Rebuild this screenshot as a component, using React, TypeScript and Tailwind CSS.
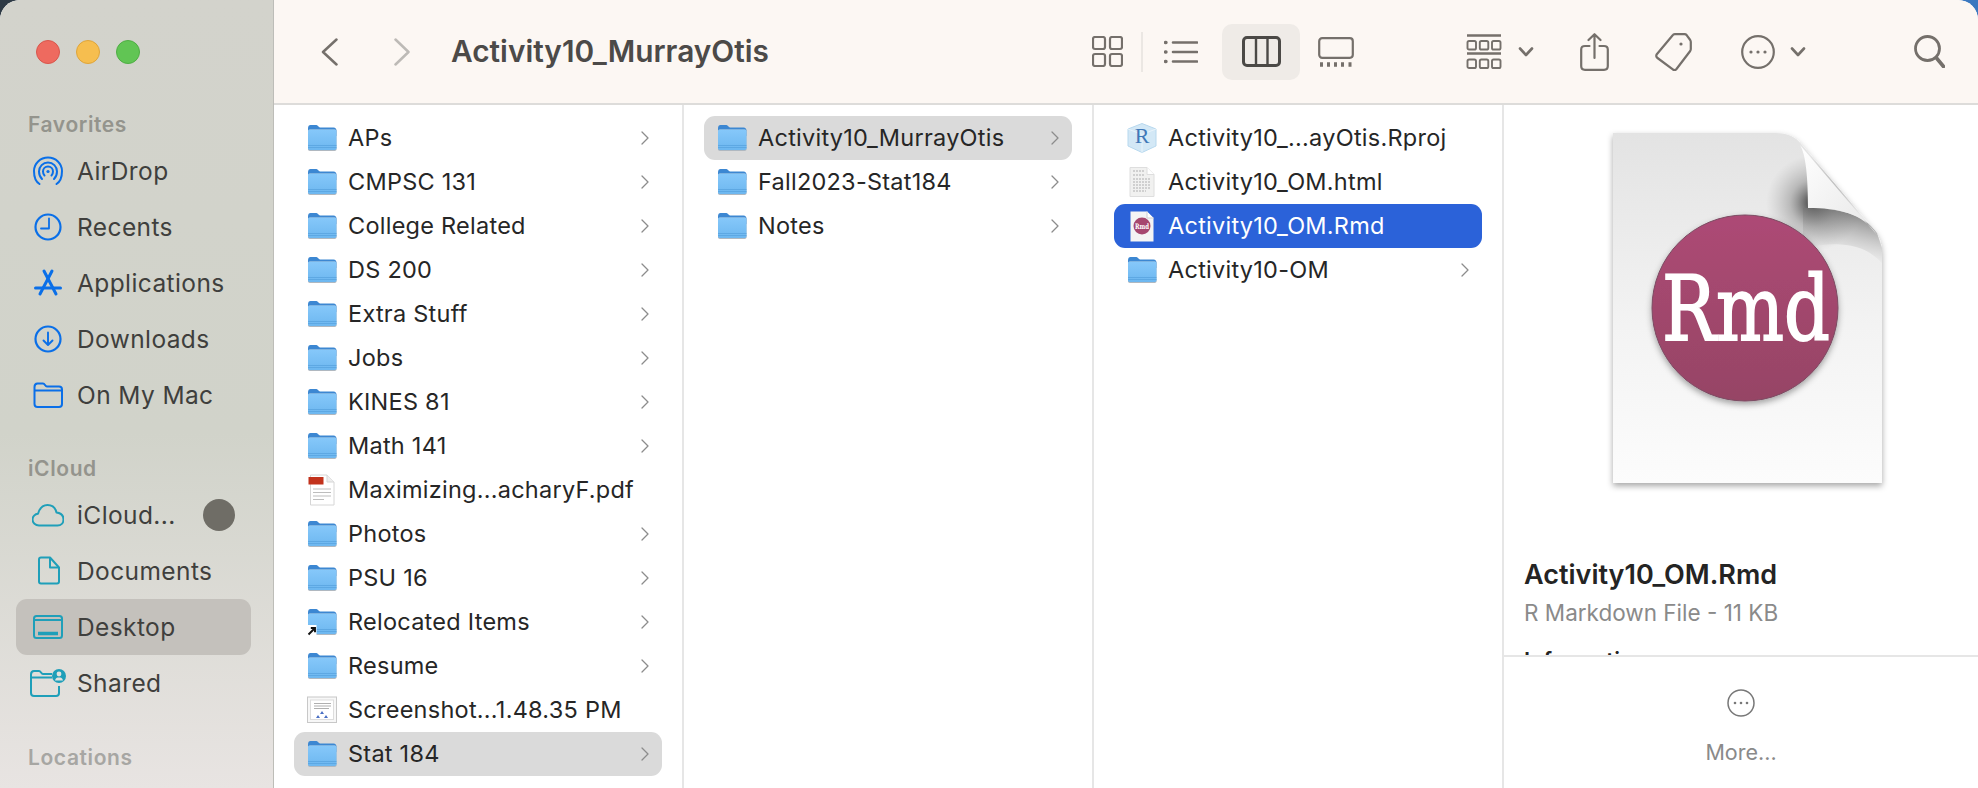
const Folder = ({ alias }: { alias?: boolean }) => (
  <svg viewBox="0 0 30 28" className="w-[30px] h-[28px] shrink-0">
    <defs>
      <linearGradient id="folderBody" x1="0" y1="0" x2="0" y2="1">
        <stop offset="0" stopColor="#86c8fa" />
        <stop offset="1" stopColor="#6db7f0" />
      </linearGradient>
    </defs>
    <path d="M1 4.5C1 2 2 1 3.5 1H9.5C11 1 11.5 3.5 13 3.5H26.5C28.5 3.5 29.5 5 29.5 6.5V12H1Z" fill="#3c87d2" />
    <rect x="1" y="5.5" width="28.5" height="21.5" rx="1.8" fill="#b0b8c0" />
    <rect x="1" y="5.5" width="28.5" height="20.5" rx="1.8" fill="url(#folderBody)" />
    <path d="M1 21.5H29.5M1 23.5H29.5" stroke="#55a0dc" strokeWidth="0.7" />
    {alias && (
      <g>
        <rect x="0" y="17" width="9.5" height="11" fill="#ffffff" />
        <path d="M1.5 26.5L7.5 20.5M3.8 20H8V24.2" stroke="#111111" strokeWidth="1.9" fill="none" />
      </g>
    )}
  </svg>
);

const Chevron = () => (
  <svg viewBox="0 0 8 14" className="w-2 h-[14px] shrink-0 ml-auto">
    <path d="M1 1L7 7L1 13" fill="none" stroke="#8c8c8c" strokeWidth="1.3" strokeLinecap="round" strokeLinejoin="round" />
  </svg>
);

const PdfIcon = () => (
  <svg viewBox="0 0 30 32" className="w-[30px] h-8 shrink-0">
    <path d="M3.5 1H20L27 8V31H3.5Z" fill="#ffffff" stroke="#d6d6d6" />
    <path d="M20 1V8H27" fill="#eeeeee" stroke="#d6d6d6" />
    <rect x="1.5" y="3" width="15" height="7.5" fill="#c2321c" />
    <path d="M6 15H24M6 18.5H24M6 22H24M6 25.5H17" stroke="#bdbdbd" />
  </svg>
);

const ImageIcon = () => (
  <svg viewBox="0 0 30 28" className="w-[30px] h-7 shrink-0">
    <rect x="0.5" y="1" width="29" height="25.5" fill="#f7f7f7" stroke="#c8c8c8" />
    <rect x="3.5" y="4" width="23" height="19.5" fill="#ffffff" stroke="#dddddd" />
    <path d="M7 7.5H24M7 10H24M7 12.5H22" stroke="#9a9a9a" strokeWidth="0.8" />
    <path d="M15 15L17 18H13ZM11 19L13 22H9ZM19 19L21 22H17Z" fill="#4a6fc4" />
  </svg>
);

const RprojIcon = () => (
  <svg viewBox="0 0 30 30" className="w-[30px] h-[30px] shrink-0">
    <path d="M15 0.5L29 6V23L15 29.5L1 23V6Z" fill="#d3e8f6" stroke="#b7d8ee" />
    <path d="M1 6L15 11.5L29 6M15 11.5V29.5" fill="none" stroke="#e9f4fb" />
    <text x="15" y="20" textAnchor="middle" fontFamily="Liberation Serif, serif" fontSize="22" fill="#3f78b8">R</text>
  </svg>
);

const HtmlIcon = () => (
  <svg viewBox="0 0 26 30" className="w-[26px] h-[30px] shrink-0">
    <path d="M1 0.5H18L25 7.5V29.5H1Z" fill="#f1f1f0" stroke="#dedede" />
    <path d="M18 0.5V7.5H25" fill="#ffffff" stroke="#dedede" />
    <path d="M4 4H15M4 8H15M4 12H21M4 15H21M4 18H21M4 21H21M4 24H17" stroke="#b0b0b0" strokeWidth="1.2" strokeDasharray="2 1" />
  </svg>
);

const RmdSmall = () => (
  <svg viewBox="0 0 24 31" className="w-6 h-[31px] shrink-0">
    <path d="M0.5 0.5H17L23.5 7V30.5H0.5Z" fill="#f4f4f4" />
    <path d="M17 0.5V7H23.5" fill="#ffffff" stroke="#d0d0d0" />
    <circle cx="12" cy="15" r="8.5" fill="#a6476f" />
    <text x="12" y="18" textAnchor="middle" fontFamily="DejaVu Serif, serif" fontWeight="bold" fontSize="7.5" textLength="14" lengthAdjust="spacingAndGlyphs" fill="#ffffff">Rmd</text>
  </svg>
);

const iconCls = "w-8 h-8 shrink-0";

const AirDropIcon = () => (
  <svg viewBox="0 0 32 32" className={iconCls} fill="none" stroke="#0a6fe8" strokeWidth="2" strokeLinecap="round">
    <path d="M7.5 29C3.5 26.5 2 22 2 16C2 8.5 8.3 2.5 16 2.5S30 8.5 30 16C30 22 28.5 26.5 24.5 29" />
    <path d="M10 24C8 22 7 19.5 7 16.5C7 11.5 11 7.5 16 7.5S25 11.5 25 16.5C25 19.5 24 22 22 24" />
    <path d="M12.5 20.5C11.5 19.5 11 18 11 16.5C11 13.7 13.2 11.5 16 11.5S21 13.7 21 16.5C21 18 20.5 19.5 19.5 20.5" />
    <circle cx="16" cy="16.5" r="1.6" fill="#0a6fe8" stroke="none" />
  </svg>
);

const RecentsIcon = () => (
  <svg viewBox="0 0 32 32" className={iconCls} fill="none" stroke="#0a6fe8" strokeWidth="2.2" strokeLinecap="round" strokeLinejoin="round">
    <circle cx="16" cy="16" r="12.5" />
    <path d="M17 7.5V17.5H9" strokeWidth="1.8" />
  </svg>
);

const AppsIcon = () => (
  <svg viewBox="0 0 32 32" className={iconCls} fill="none" stroke="#0a6fe8" strokeWidth="3" strokeLinecap="round">
    <path d="M12 4L24 27" />
    <path d="M20 4L8 27" />
    <path d="M3.5 21H28.5" />
  </svg>
);

const DownloadsIcon = () => (
  <svg viewBox="0 0 32 32" className={iconCls} fill="none" stroke="#0a6fe8" strokeWidth="2.2" strokeLinecap="round" strokeLinejoin="round">
    <circle cx="16" cy="16" r="12.5" />
    <path d="M16 9.5V21.5M11.5 17.5L16 22L20.5 17.5" strokeWidth="1.9" />
  </svg>
);

const MacIcon = () => (
  <svg viewBox="0 0 32 32" className={iconCls} fill="none" stroke="#0a6fe8" strokeWidth="2" strokeLinejoin="round">
    <path d="M2.5 8C2.5 5.5 3.5 4.5 5.5 4.5H11C13 4.5 13 7.5 15 7.5H27C29 7.5 30 8.5 30 10.5V25C30 27 29 28 27 28H5.5C3.5 28 2.5 27 2.5 25Z" />
    <path d="M2.5 11.5H30" />
  </svg>
);

const CloudIcon = () => (
  <svg viewBox="0 0 32 32" className={iconCls} fill="none" stroke="#1f9fb9" strokeWidth="2" strokeLinejoin="round">
    <path d="M7 26.5C3.5 26.5 0.5 24 0.5 20.5C0.5 17.5 3 15 6 14.8C7.5 9.5 11 6 15.5 6C20 6 23.5 9 24.5 13.5C28.5 14 31.5 16.5 31.5 20.5C31.5 24 29 26.5 25.5 26.5Z" />
  </svg>
);

const DocIcon = () => (
  <svg viewBox="0 0 32 32" className={iconCls} fill="none" stroke="#1f9fb9" strokeWidth="2" strokeLinejoin="round">
    <path d="M7 4.5C7 3.3 7.8 2.5 9 2.5H18L27 12.5V26.5C27 27.8 26.2 28.5 25 28.5H9C7.8 28.5 7 27.8 7 26.5Z" />
    <path d="M18 2.5V12.5H27" />
  </svg>
);

const DesktopIcon = () => (
  <svg viewBox="0 0 32 32" className={iconCls} fill="none" stroke="#1f9fb9" strokeWidth="2">
    <rect x="2" y="5" width="28" height="22" rx="2.5" />
    <path d="M2 9H30" />
    <path d="M6 22.5H26" strokeWidth="3.5" />
  </svg>
);

const SharedIcon = () => (
  <svg viewBox="0 0 36 32" className="w-9 h-8 shrink-0" fill="none" stroke="#1f9fb9" strokeWidth="2" strokeLinejoin="round">
    <path d="M22 7H13C11 7 11 4 9 4H4C2 4 1 5 1 7.5V26C1 28 2 29 4 29H26C28 29 29 28 29 26V19" />
    <path d="M1 10.5H22" />
    <circle cx="29" cy="9" r="7" fill="#1f9fb9" stroke="none" />
    <circle cx="29" cy="7" r="2.4" fill="#e3e2dd" stroke="none" />
    <path d="M25 13.5C25.5 11 27 10.5 29 10.5S32.5 11 33 13.5Z" fill="#e3e2dd" stroke="none" />
  </svg>
);

const SideRow = ({ icon, label, active, badge }: { icon: React.ReactNode; label: string; active?: boolean; badge?: boolean }) => (
  <div className={`flex items-center h-14 rounded-[11px] pl-4 ${active ? "bg-[#c4c1bc]" : ""}`}>
    <div className="w-8 flex justify-center shrink-0">{icon}</div>
    <span className="ml-[13px] text-[24.5px] tracking-[0.4px] text-[#3f3f3d]">{label}</span>
    {badge && <span className="ml-auto mr-4 w-8 h-8 rounded-full bg-[#6f6d66]" />}
  </div>
);

const SideLabel = ({ text, className }: { text: string; className?: string }) => (
  <div className={`h-9 flex items-center pl-3 text-[21px] tracking-[0.6px] font-semibold text-[#94948d] ${className ?? ""}`}>{text}</div>
);

const TrafficLights = () => (
  <div className="flex gap-4 ml-5 mb-[43px]">
    <span className="w-6 h-6 rounded-full bg-[#ee6a5f] border border-[#d9564c]" />
    <span className="w-6 h-6 rounded-full bg-[#f6be4f] border border-[#dfa53a]" />
    <span className="w-6 h-6 rounded-full bg-[#61c554] border border-[#4fae44]" />
  </div>
);

const Sidebar = () => (
  <aside className="w-[274px] shrink-0 h-full pt-10 pl-4 pr-[22px] border-r border-[#bdbdb8] overflow-hidden bg-linear-to-b from-[#d3d3cc] via-[#d1d3ca] via-55% to-[#e8e4e2]">
    <TrafficLights />
    <SideLabel text="Favorites" />
    <SideRow icon={<AirDropIcon />} label="AirDrop" />
    <SideRow icon={<RecentsIcon />} label="Recents" />
    <SideRow icon={<AppsIcon />} label="Applications" />
    <SideRow icon={<DownloadsIcon />} label="Downloads" />
    <SideRow icon={<MacIcon />} label="On My Mac" />
    <SideLabel text="iCloud" className="mt-7" />
    <SideRow icon={<CloudIcon />} label="iCloud..." badge />
    <SideRow icon={<DocIcon />} label="Documents" />
    <SideRow icon={<DesktopIcon />} label="Desktop" active />
    <SideRow icon={<SharedIcon />} label="Shared" />
    <SideLabel text="Locations" className="mt-[29px] text-[#a7a6a3]" />
  </aside>
);

const Row = ({ icon, label, arrow, state }: { icon: React.ReactNode; label: string; arrow?: boolean; state?: "path" | "selected" }) => (
  <div
    className={`flex items-center h-11 rounded-[11px] pl-[13px] pr-[13px] ${
      state === "path" ? "bg-[#dadada]" : state === "selected" ? "bg-[#2b62d9]" : ""
    }`}
  >
    <div className="w-[30px] flex justify-center shrink-0">{icon}</div>
    <span className={`ml-[11px] text-[23.5px] tracking-[0.25px] whitespace-nowrap ${state === "selected" ? "text-white" : "text-[#262626]"}`}>{label}</span>
    {arrow && <Chevron />}
  </div>
);

const firstColumn = [
  "APs",
  "CMPSC 131",
  "College Related",
  "DS 200",
  "Extra Stuff",
  "Jobs",
  "KINES 81",
  "Math 141",
];

const secondPart = ["Photos", "PSU 16"];

const Column = ({ children }: { children: React.ReactNode }) => (
  <div className="w-[410px] shrink-0 h-full pt-[11px] pl-5 pr-5 border-r-2 border-[#e6e6e6]">{children}</div>
);

const ToolIcon = ({ className, viewBox, children, stroke = "#75706b" }: { className: string; viewBox: string; children: React.ReactNode; stroke?: string }) => (
  <svg viewBox={viewBox} className={`shrink-0 ${className}`} fill="none" stroke={stroke} strokeWidth="2.2" strokeLinecap="round" strokeLinejoin="round">
    {children}
  </svg>
);

const SmallChevron = ({ className }: { className: string }) => (
  <ToolIcon className={`w-4 h-[10px] ${className}`} viewBox="0 0 16 10">
    <path d="M2 1.5L8 8L14 1.5" strokeWidth="2.6" />
  </ToolIcon>
);

const Toolbar = () => (
  <div className="h-[105px] shrink-0 flex items-center bg-[#fcf7f3] border-b-2 border-[#dddcda]">
    <ToolIcon className="w-[17px] h-[28px] ml-[47px]" viewBox="0 0 17 28" stroke="#75706b">
      <path d="M15.5 1.5L2 14L15.5 26.5" strokeWidth="2.5" />
    </ToolIcon>
    <ToolIcon className="w-4 h-[28px] ml-[56px]" viewBox="0 0 16 28" stroke="#bdbab6">
      <path d="M1.5 1.5L14.5 14L1.5 26.5" strokeWidth="2.5" />
    </ToolIcon>
    <div className="w-[320px] ml-[41px] text-[29.8px] font-semibold text-[#4c4a48] whitespace-nowrap">Activity10_MurrayOtis</div>

    <ToolIcon className="w-[31px] h-[31px] ml-[321px]" viewBox="0 0 31 31">
      <rect x="1" y="1" width="12" height="12" rx="2" />
      <rect x="18" y="1" width="12" height="12" rx="2" />
      <rect x="1" y="18" width="12" height="12" rx="2" />
      <rect x="18" y="18" width="12" height="12" rx="2" />
    </ToolIcon>
    <div className="w-[2px] h-10 ml-[18px] bg-[#ebe7e3]" />
    <ToolIcon className="w-[34px] h-6 ml-[21px]" viewBox="0 0 34 24">
      <path d="M9 2.5H33M9 12H33M9 21.5H33" strokeWidth="2.6" />
      <path d="M1.5 2.5H2M1.5 12H2M1.5 21.5H2" strokeWidth="3.4" />
    </ToolIcon>
    <div className="w-[78px] h-14 ml-6 rounded-[10px] bg-[#efebe7] flex items-center justify-center">
      <ToolIcon className="w-[39px] h-[31px]" viewBox="0 0 39 31" stroke="#4b4946">
        <rect x="1.5" y="1.5" width="36" height="28" rx="3.5" strokeWidth="3" />
        <path d="M14 2V29M25.5 2V29" strokeWidth="2.4" />
      </ToolIcon>
    </div>
    <ToolIcon className="w-9 h-[30px] ml-[18px]" viewBox="0 0 36 30">
      <rect x="1.2" y="1.2" width="33.6" height="19.6" rx="3" />
      <path d="M2 27.5H5M9 27.5H12M16 27.5H19M23 27.5H26M30.5 27.5H33.5" strokeWidth="4.4" strokeLinecap="butt" />
    </ToolIcon>

    <ToolIcon className="w-9 h-9 ml-[112px]" viewBox="0 0 36 36">
      <path d="M1 1.5H35M1 19.5H35" strokeWidth="2.6" strokeLinecap="butt" />
      <rect x="1.5" y="7" width="8.5" height="8.5" rx="1.6" strokeWidth="1.9" />
      <rect x="13.8" y="7" width="8.5" height="8.5" rx="1.6" strokeWidth="1.9" />
      <rect x="26" y="7" width="8.5" height="8.5" rx="1.6" strokeWidth="1.9" />
      <rect x="1.5" y="25.5" width="8.5" height="8.5" rx="1.6" strokeWidth="1.9" />
      <rect x="13.8" y="25.5" width="8.5" height="8.5" rx="1.6" strokeWidth="1.9" />
      <rect x="26" y="25.5" width="8.5" height="8.5" rx="1.6" strokeWidth="1.9" />
    </ToolIcon>
    <SmallChevron className="ml-4" />
    <ToolIcon className="w-[29px] h-[38px] ml-[46px]" viewBox="0 0 29 38">
      <path d="M9.5 13H5C2.5 13 1.2 14.3 1.2 16.5V33C1.2 35.5 2.5 36.8 5 36.8H24C26.5 36.8 27.8 35.5 27.8 33V16.5C27.8 14.3 26.5 13 24 13H19.5" />
      <path d="M14.5 25V1.5M8.5 7L14.5 1.2L20.5 7" />
    </ToolIcon>
    <ToolIcon className="w-[37px] h-[38px] ml-[46px]" viewBox="0 0 37 38">
      <path d="M17.5 2.5C18 1.7 18.8 1.2 19.8 1.2H29.5C30.5 1.2 31.2 1.6 31.8 2.3L35.2 7C35.6 7.6 35.8 8.2 35.8 9V16C35.8 16.8 35.6 17.4 35.2 18L21.5 36C20.5 37.2 18.8 37.2 17.8 36.4L2.5 25C1.2 24 1 22.5 1.8 21.2Z" />
      <circle cx="26" cy="11" r="1.6" fill="#75706b" stroke="none" />
    </ToolIcon>
    <ToolIcon className="w-[34px] h-[34px] ml-[49px]" viewBox="0 0 34 34">
      <circle cx="17" cy="17" r="15.8" />
      <circle cx="10" cy="17" r="1.6" fill="#75706b" stroke="none" />
      <circle cx="17" cy="17" r="1.6" fill="#75706b" stroke="none" />
      <circle cx="24" cy="17" r="1.6" fill="#75706b" stroke="none" />
    </ToolIcon>
    <SmallChevron className="ml-[15px]" />
    <ToolIcon className="w-[31px] h-[33px] ml-[108px]" viewBox="0 0 31 33">
      <circle cx="13.5" cy="13.5" r="12" strokeWidth="2.8" />
      <path d="M22.5 23L29.5 31.5" strokeWidth="3.6" />
    </ToolIcon>
  </div>
);

const paperPath = "M15 10H177C190 10 198 14 204 22L277 108C281 113 284 120 284 130V360H15Z";

const BigRmd = () => (
  <svg viewBox="0 0 300 380" className="w-[300px] h-[380px] shrink-0">
    <defs>
      <linearGradient id="paper" x1="0" y1="0" x2="0" y2="1">
        <stop offset="0" stopColor="#e3e3e3" />
        <stop offset="0.55" stopColor="#f3f3f3" />
        <stop offset="1" stopColor="#fcfcfc" />
      </linearGradient>
      <linearGradient id="disc" x1="0" y1="0" x2="0" y2="1">
        <stop offset="0" stopColor="#ad4a75" />
        <stop offset="1" stopColor="#964465" />
      </linearGradient>
      <linearGradient id="curl" x1="0" y1="0" x2="1" y2="1">
        <stop offset="0" stopColor="#ffffff" />
        <stop offset="1" stopColor="#e6e6e6" />
      </linearGradient>
      <radialGradient id="cornerShade" gradientUnits="userSpaceOnUse" cx="216" cy="80" r="48">
        <stop offset="0.1" stopColor="#404040" stopOpacity="0.9" />
        <stop offset="0.5" stopColor="#808080" stopOpacity="0.45" />
        <stop offset="1" stopColor="#a0a0a0" stopOpacity="0" />
      </radialGradient>
      <linearGradient id="underShade" gradientUnits="userSpaceOnUse" x1="240" y1="88" x2="230" y2="130">
        <stop offset="0" stopColor="#707070" stopOpacity="0.75" />
        <stop offset="1" stopColor="#b0b0b0" stopOpacity="0" />
      </linearGradient>
      <filter id="soft" x="-10%" y="-10%" width="120%" height="120%">
        <feDropShadow dx="0" dy="3" stdDeviation="3" floodColor="#000000" floodOpacity="0.35" />
      </filter>
    </defs>
    <path d={paperPath} fill="url(#paper)" filter="url(#soft)" />
    <path d={paperPath} fill="url(#cornerShade)" />
    <path d="M205 85C240 85 265 90 279 110L284 125V140C265 120 240 118 205 125Z" fill="url(#underShade)" />
    <path d="M202 22C208 32 210 55 210 85C240 85 265 90 279 112Z" fill="url(#curl)" />
    <circle cx="147" cy="185" r="93" fill="url(#disc)" stroke="#7b4b62" strokeWidth="1" filter="url(#soft)" />
    <text
      x="64"
      y="217"
      fontFamily="DejaVu Serif, serif"
      fontSize="90"
      textLength="168"
      lengthAdjust="spacingAndGlyphs"
      fill="#ffffff"
      stroke="#ffffff"
      strokeWidth="1.8"
    >
      Rmd
    </text>
  </svg>
);

const Preview = () => (
  <div className="flex-1 h-full flex flex-col overflow-hidden">
    <div className="h-[550px] shrink-0 overflow-hidden">
      <div className="flex pt-[18px] pl-[94px]">
        <BigRmd />
      </div>
      <div className="pl-5 mt-[55px]">
        <div className="text-[27px] leading-[34px] font-semibold text-[#242424]">Activity10_OM.Rmd</div>
        <div className="mt-[6px] text-[22.5px] leading-[30px] text-[#8a8a8a]">R Markdown File - 11 KB</div>
        <div className="mt-4 text-[22px] font-semibold text-[#242424]">Information</div>
      </div>
    </div>
    <div className="flex-1 border-t-2 border-[#e6e6e6] flex flex-col items-center pt-8">
      <svg viewBox="0 0 28 28" className="w-7 h-7" fill="none" stroke="#787878" strokeWidth="1.5">
        <circle cx="14" cy="14" r="13" />
        <circle cx="8" cy="14" r="1.3" fill="#787878" stroke="none" />
        <circle cx="14" cy="14" r="1.3" fill="#787878" stroke="none" />
        <circle cx="20" cy="14" r="1.3" fill="#787878" stroke="none" />
      </svg>
      <div className="mt-[19px] text-[21.5px] text-[#8a8a8a]">More...</div>
    </div>
  </div>
);

export default function App() {
  return (
    <div className="w-screen h-screen overflow-hidden bg-linear-to-r from-[#2e3a45] to-[#3a78c0] font-[family-name:Inter,sans-serif]">
      <div className="flex w-full h-full overflow-hidden rounded-t-[20px] bg-white">
        <Sidebar />
        <main className="flex-1 min-w-0 h-full flex flex-col">
          <Toolbar />
          <div className="flex-1 min-h-0 flex">
            <Column>
              {firstColumn.map((n) => (
                <Row key={n} icon={<Folder />} label={n} arrow />
              ))}
              <Row icon={<PdfIcon />} label="Maximizing...acharyF.pdf" />
              {secondPart.map((n) => (
                <Row key={n} icon={<Folder />} label={n} arrow />
              ))}
              <Row icon={<Folder alias />} label="Relocated Items" arrow />
              <Row icon={<Folder />} label="Resume" arrow />
              <Row icon={<ImageIcon />} label="Screenshot...1.48.35 PM" />
              <Row icon={<Folder />} label="Stat 184" arrow state="path" />
            </Column>
            <Column>
              <Row icon={<Folder />} label="Activity10_MurrayOtis" arrow state="path" />
              <Row icon={<Folder />} label="Fall2023-Stat184" arrow />
              <Row icon={<Folder />} label="Notes" arrow />
            </Column>
            <Column>
              <Row icon={<RprojIcon />} label="Activity10_...ayOtis.Rproj" />
              <Row icon={<HtmlIcon />} label="Activity10_OM.html" />
              <Row icon={<RmdSmall />} label="Activity10_OM.Rmd" state="selected" />
              <Row icon={<Folder />} label="Activity10-OM" arrow />
            </Column>
            <Preview />
          </div>
        </main>
      </div>
    </div>
  );
}
